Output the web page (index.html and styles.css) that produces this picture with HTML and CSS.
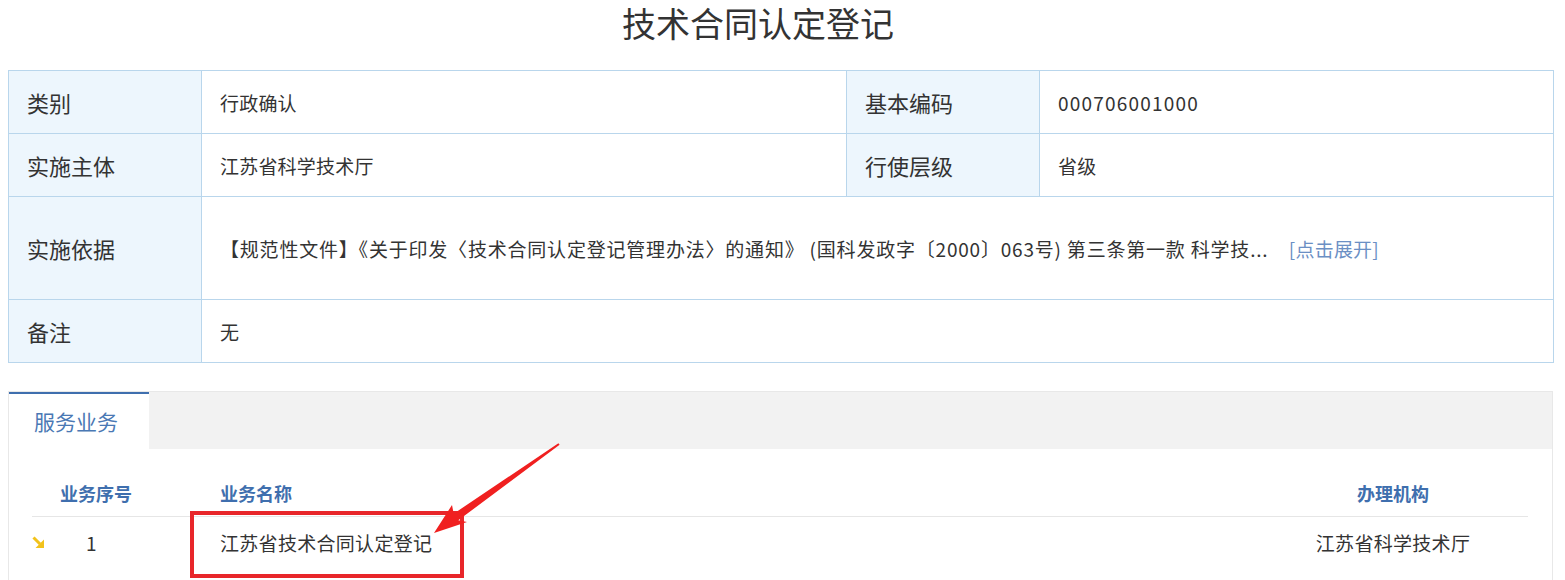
FILE: index.html
```html
<!DOCTYPE html>
<html lang="zh-CN">
<head>
  <meta charset="UTF-8">
  <title>技术合同认定登记</title>
  <link rel="stylesheet" href="styles.css">
</head>
<body>

  <h1 class="page-title">技术合同认定登记</h1>

  <table class="info-table">
    <colgroup>
      <col class="col-label">
      <col class="col-value">
      <col class="col-label">
      <col class="col-value-wide">
    </colgroup>
    <tr class="row-normal">
      <th>类别</th>
      <td>行政确认</td>
      <th>基本编码</th>
      <td class="code">000706001000</td>
    </tr>
    <tr class="row-normal">
      <th>实施主体</th>
      <td>江苏省科学技术厅</td>
      <th>行使层级</th>
      <td>省级</td>
    </tr>
    <tr class="row-tall">
      <th>实施依据</th>
      <td colspan="3">
        <span class="basis-text">【规范性文件】《关于印发〈技术合同认定登记管理办法〉的通知》 (国科发政字〔2000〕063号) 第三条第一款 科学技...</span>
        <a class="expand-link">[点击展开]</a>
      </td>
    </tr>
    <tr class="row-normal">
      <th>备注</th>
      <td colspan="3">无</td>
    </tr>
  </table>

  <div class="tab-box">
    <div class="tab-bar">
      <div class="tab-item active">服务业务</div>
    </div>
    <div class="tab-content">
      <table class="service-table">
        <colgroup>
          <col class="col-no">
          <col class="col-name">
          <col class="col-org">
        </colgroup>
        <thead>
          <tr>
            <th class="th-no">业务序号</th>
            <th>业务名称</th>
            <th class="th-org">办理机构</th>
          </tr>
        </thead>
        <tbody>
          <tr>
            <td class="td-no">
              <svg class="row-icon" width="12" height="12" viewBox="0 0 12 12">
                <path d="M1.5 1.5 L8 8" stroke="#f2c21b" stroke-width="3" fill="none"/>
                <polygon points="12,3.5 12,12 3.5,12" fill="#f2c21b"/>
              </svg>
              <span class="row-num">1</span>
            </td>
            <td>江苏省技术合同认定登记</td>
            <td class="td-org">江苏省科学技术厅</td>
          </tr>
        </tbody>
      </table>
    </div>

    <!-- пометка поверх скриншота -->
    <div class="mark-box"></div>
    <svg class="mark-arrow" width="150" height="100" viewBox="425 435 150 100">
      <polygon points="433,531 451,503 452.7,511.7 557.4,441.2 558.6,442.8 457.3,518.3 466,520" fill="#f02020"/>
    </svg>
  </div>

</body>
</html>
```

FILE: styles.css
```css
body {
  margin: 0 8px;
  background: #fff;
  font-family: "Noto Sans CJK SC", "Microsoft YaHei", sans-serif;
  color: #333;
}
.page-title {
  margin: 0 49px 26px 0;
  padding-top: 1px;
  height: 43px;
  line-height: 43px;
  font-size: 34px;
  font-weight: 400;
  text-align: center;
  color: #333;
}
.info-table {
  width: 1545px;
  border-collapse: collapse;
  table-layout: fixed;
}
.col-label {
  width: 193px;
}
.col-value {
  width: 645px;
}
.col-value-wide {
  width: 514px;
}
.info-table th,
.info-table td {
  border: 1px solid #b9d6ec;
  padding: 0 0 0 18px;
  text-align: left;
  white-space: nowrap;
}
.info-table th {
  background-color: #edf6fd;
  font-size: 22px;
  font-weight: 400;
  color: #333;
}
.info-table td {
  font-size: 19px;
  letter-spacing: 0.2px;
  color: #333;
}
.info-table td.code {
  letter-spacing: 1.2px;
}
.row-normal {
  height: 63px;
}
.row-tall {
  height: 103px;
}
.basis-text {
  letter-spacing: 0.8px;
}
.expand-link {
  margin-left: 16px;
  color: #6b8fc4;
  cursor: pointer;
}
.tab-box {
  position: relative;
  margin-top: 28px;
  width: 1543px;
  height: 190px;
  border: 1px solid #e8e8e8;
  border-bottom: none;
}
.tab-bar {
  display: flex;
  height: 57px;
  background-color: #f2f2f2;
}
.tab-item {
  width: 140px;
  padding-left: 25px;
  box-sizing: border-box;
  line-height: 55px;
  font-size: 21px;
  color: #4a78b4;
}
.tab-item.active {
  background-color: #fff;
  border-top: 2px solid #3f6fae;
}
.tab-content {
  padding: 20px 24px 0 23px;
}
.service-table {
  width: 1496px;
  border-collapse: collapse;
  table-layout: fixed;
}
.col-no {
  width: 188px;
}
.col-org {
  width: 270px;
}
.service-table th {
  height: 47px;
  padding: 0;
  text-align: left;
  font-size: 18px;
  font-weight: 700;
  color: #3f6fae;
  border-bottom: 1px solid #e6e6e6;
}
.service-table .th-no {
  padding-left: 28px;
}
.service-table .th-org,
.service-table .td-org {
  text-align: center;
}
.service-table td {
  height: 50px;
  padding: 0;
  font-size: 19px;
  letter-spacing: 0.3px;
  color: #333;
}
.td-no {
  display: flex;
  align-items: center;
}
.row-icon {
  margin-right: 42px;
}
.mark-box {
  position: absolute;
  left: 181px;
  top: 119px;
  width: 274px;
  height: 67px;
  box-sizing: border-box;
  border: 4px solid #e8262a;
}
.mark-arrow {
  position: absolute;
  left: 417px;
  top: 45px;
}
```
